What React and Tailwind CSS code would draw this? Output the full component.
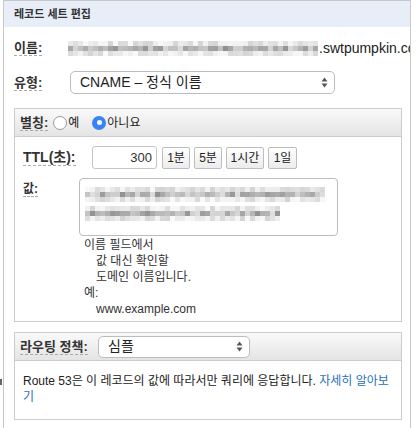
import React from "react";

function rng(seed) {
  let s = seed;
  return () => {
    s = (s * 1103515245 + 12345) & 0x7fffffff;
    return s / 0x7fffffff;
  };
}

function Pixels({ cols, rows, seed, size = 5, dark = [1] }) {
  const r = rng(seed);
  const grid = [];
  for (let y = 0; y < rows; y++) {
    const row = [];
    for (let x = 0; x < cols; x++) {
      const isDark = dark.includes(y);
      const v = isDark ? 145 + Math.floor(r() * 80) : 212 + Math.floor(r() * 38);
      row.push(`rgb(${v},${v},${v})`);
    }
    grid.push(row);
  }
  return (
    <div className="flex flex-col shrink-0">
      {grid.map((row, i) => (
        <div key={i} className="flex">
          {row.map((c, j) => (
            <div key={j} className="shrink-0" style={{ width: size, height: size, backgroundColor: c }} />
          ))}
        </div>
      ))}
    </div>
  );
}

function Arrows() {
  return (
    <svg width="7" height="11" viewBox="0 0 7 11" className="shrink-0">
      <path d="M3.5 0.5 L6.5 4.5 L0.5 4.5 Z" fill="#555" />
      <path d="M3.5 10.5 L6.5 6.5 L0.5 6.5 Z" fill="#555" />
    </svg>
  );
}

function Label({ children, className = "" }) {
  return (
    <span className={`font-bold text-[#333] border-b border-dashed border-[#aaa] leading-[15px] ${className}`}>
      {children}
    </span>
  );
}

function Btn({ children, w }) {
  return (
    <div
      className={`${w} h-[22px] flex items-center justify-center text-[12px] text-[#222] border border-[#bdbdbd] rounded-[2px] bg-gradient-to-b from-[#ffffff] to-[#ececec]`}
    >
      {children}
    </div>
  );
}

export default function App() {
  return (
    <div className="relative w-[417px] h-[428px] bg-white overflow-hidden font-['Liberation_Sans','Noto_Sans_CJK_KR',sans-serif] text-[#333]">
      <span className="absolute left-0 top-[379px] w-[2px] h-[6px] bg-[#666]" />
      <div className="ml-[3px] w-[408px] h-[440px] border-l border-r border-t border-[#c9c9c9] overflow-hidden">
        {/* header */}
        <div className="h-[26px] bg-[#e7eef8] flex items-center pl-[10px] text-[11px] font-bold text-[#333]">
          레코드 세트 편집
        </div>

        {/* name row */}
        <div className="mt-[11px] h-[20px] flex items-center whitespace-nowrap">
          <div className="w-[64px] shrink-0 pl-[10px] text-[13px]">
            <Label>이름:</Label>
          </div>
          <Pixels cols={50} rows={3} seed={7} />
          <span className="shrink-0 text-[14px] text-[#222] ml-[1px]">.swtpumpkin.com</span>
        </div>

        {/* type row */}
        <div className="mt-[13px] h-[23px] flex items-center">
          <div className="w-[66px] pl-[10px] text-[13px]">
            <Label>유형:</Label>
          </div>
          <div className="w-[265px] h-[23px] border border-[#bcbcbc] rounded-[5px] bg-white flex items-center justify-between pl-[9px] pr-[6px]">
            <span className="text-[14px] text-[#222]">CNAME – 정식 이름</span>
            <Arrows />
          </div>
        </div>

        {/* alias panel */}
        <div className="mt-[14px] ml-[10px] w-[388px] border border-[#cccccc]">
          <div className="h-[28px] border-b border-[#cccccc] bg-gradient-to-b from-[#fafafa] to-[#e4e4e4] flex items-center pl-[5px] text-[13px]">
            <Label>별칭:</Label>
            <span className="ml-[5px] w-[14px] h-[14px] rounded-full border border-[#9a9a9a] bg-white" />
            <span className="ml-[1px] text-[12px] text-[#222]">예</span>
            <span className="ml-[13px] w-[14px] h-[14px] rounded-full bg-[#3a82f7] flex items-center justify-center">
              <span className="w-[5px] h-[5px] rounded-full bg-white" />
            </span>
            <span className="ml-[1px] text-[12px] text-[#222]">아니요</span>
          </div>
          <div className="pl-[8px] pt-[9px] pb-[4px]">
            <div className="flex items-center h-[23px]">
              <div className="w-[69px] text-[14px]">
                <Label className="leading-[17px]">TTL(초):</Label>
              </div>
              <div className="w-[65px] h-[23px] border border-[#c4c4c4] rounded-[3px] flex items-center justify-end pr-[4px] text-[13px] text-[#333]">
                300
              </div>
              <div className="ml-[5px] flex gap-[4px]">
                <Btn w="w-[28px]">1분</Btn>
                <Btn w="w-[28px]">5분</Btn>
                <Btn w="w-[38px]">1시간</Btn>
                <Btn w="w-[29px]">1일</Btn>
              </div>
            </div>
            <div className="mt-[9px] flex">
              <div className="w-[56px] shrink-0 pt-[2px] text-[12px]">
                <Label>값:</Label>
              </div>
              <div>
                <div className="w-[259px] h-[58px] border border-[#bcbcbc] rounded-[4px] pl-[5px] pt-[8px]">
                  <Pixels cols={48} rows={3} seed={31} size={5} />
                  <div className="mt-[4px]">
                    <Pixels cols={39} rows={3} seed={91} size={5} />
                  </div>
                </div>
                <div className="pl-[5px] text-[12px] leading-[16px] text-[#333] pt-[1px]">
                  <div>이름 필드에서</div>
                  <div className="pl-[12px]">값 대신 확인할</div>
                  <div className="pl-[12px]">도메인 이름입니다.</div>
                  <div>예:</div>
                  <div className="pl-[12px]">www.example.com</div>
                </div>
              </div>
            </div>
          </div>
        </div>

        {/* routing panel */}
        <div className="mt-[10px] ml-[10px] w-[388px] border border-[#cccccc]">
          <div className="h-[28px] border-b border-[#cccccc] bg-gradient-to-b from-[#fafafa] to-[#e4e4e4] flex items-center pl-[5px] text-[13px]">
            <div className="w-[78px]">
              <Label>라우팅 정책:</Label>
            </div>
            <div className="w-[152px] h-[22px] border border-[#bcbcbc] rounded-[5px] bg-white flex items-center justify-between pl-[9px] pr-[6px]">
              <span className="text-[14px] text-[#222]">심플</span>
              <Arrows />
            </div>
          </div>
          <div className="pl-[8px] pr-[6px] pt-[12px] pb-[14px] text-[12px] leading-[16px] text-[#222]">
            Route 53은 이 레코드의 값에 따라서만 쿼리에 응답합니다.{" "}
            <span className="text-[#1f6fb8]">자세히 알아보기</span>
          </div>
        </div>
      </div>
    </div>
  );
}
